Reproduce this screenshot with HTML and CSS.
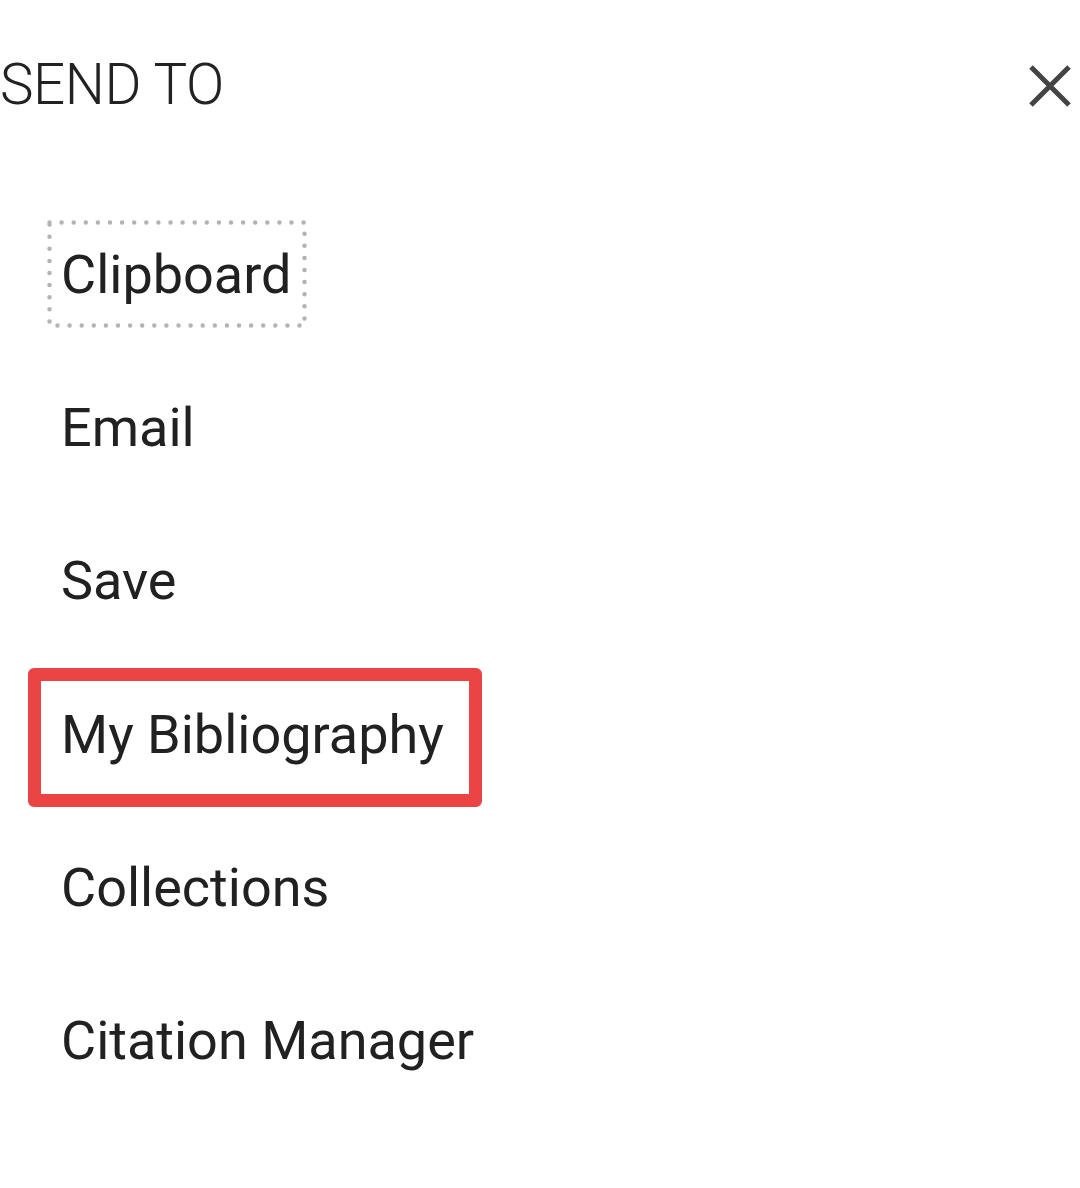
FILE: index.html
```html
<!DOCTYPE html>
<html lang="en">
<head>
<meta charset="utf-8">
<title>Send to</title>
<link rel="stylesheet" href="styles.css">
</head>
<body>
<div class="panel">
  <header class="header">
    <h1 class="title">SEND TO</h1>
    <button class="close" aria-label="Close">
      <svg width="44" height="44" viewBox="0 0 44 44"><path d="M3 3 L41 41 M41 3 L3 41" stroke="#444" stroke-width="5" fill="none"/></svg>
    </button>
  </header>
  <ul class="menu">
    <li class="item focused">
      <span class="label">Clipboard</span>
      <svg class="focus-ring" width="260" height="108" viewBox="0 0 260 108"><rect x="2.5" y="2.5" width="255" height="103" fill="none" stroke="#b3b3b3" stroke-width="4.5" stroke-linecap="round" stroke-dasharray="0 12.1"/></svg>
    </li>
    <li class="item"><span class="label">Email</span></li>
    <li class="item"><span class="label">Save</span></li>
    <li class="item highlighted"><span class="label">My Bibliography</span><span class="annot"></span></li>
    <li class="item"><span class="label">Collections</span></li>
    <li class="item"><span class="label">Citation Manager</span></li>
  </ul>
</div>
</body>
</html>
```

FILE: styles.css
```css
html, body {
  margin: 0;
  padding: 0;
  background: #ffffff;
}
body {
  width: 1080px;
  height: 1188px;
  overflow: hidden;
  font-family: Roboto, "Noto Sans", sans-serif;
  color: #212121;
}
.panel {
  display: flex;
  flex-direction: column;
}
.header {
  display: flex;
  justify-content: space-between;
  align-items: flex-start;
  height: 172px;
  padding: 0 8px 0 0;
}
.title {
  margin: 0;
  padding-top: 57px;
  font-weight: 300;
  font-size: 56.5px;
  letter-spacing: -0.4px;
  color: #222;
  line-height: 1;
}
.close {
  border: 0;
  background: none;
  padding: 0;
  margin: 64px 0 0 0;
  width: 44px;
  height: 44px;
}
.close svg { display: block; }
.menu {
  list-style: none;
  margin: 48px 0 0 0;
  padding: 0 0 0 47px;
  display: flex;
  flex-direction: column;
  align-items: flex-start;
  gap: 45.2px;
}
.item {
  position: relative;
  height: 108px;
  padding: 0 15px 0 14px;
  font-size: 54px;
  line-height: 110px;
  white-space: nowrap;
}
.focus-ring {
  position: absolute;
  left: 0;
  top: 0;
}
.annot {
  position: absolute;
  left: -19px;
  top: -12px;
  width: 428px;
  height: 113px;
  border: 13px solid #ea4445;
  border-radius: 6px;
}
```
